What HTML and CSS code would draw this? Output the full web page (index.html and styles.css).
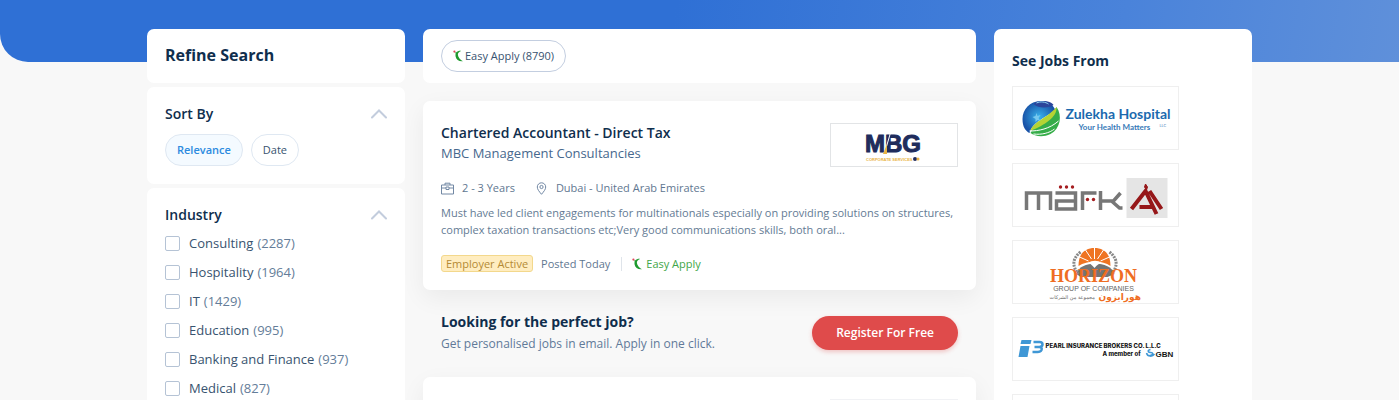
FILE: index.html
```html
<!DOCTYPE html>
<html lang="en">
<head>
<meta charset="utf-8">
<meta name="viewport" content="width=device-width, initial-scale=1">
<title>Jobs</title>
<link rel="stylesheet" href="styles.css">
</head>
<body>
<svg class="defs" aria-hidden="true">
  <symbol id="easy" viewBox="0 0 10 12"><path d="M1.800 2.200 3 2.600C4.500 1.200 6.300.7 8 .9 5.700 1.700 4.700 3.200 4.900 5 5.200 7.500 7.200 9.700 9.900 11.200 5.900 11.600 3.200 9.600 2.600 6.500 2.400 5 2.500 4 2.700 3.400z" fill="#1f9a2e"/><circle cx="1.400" cy="1.600" r="1.100" fill="#e0455a"/></symbol>
  <symbol id="chevron" viewBox="0 0 16 10"><path d="M1 8.500 8 1.500l7 7" fill="none" stroke="#c3cddd" stroke-width="2" stroke-linecap="round"/></symbol>
</svg>
<div class="page">
  <main class="columns">
    <aside class="filters">
      <section class="card filters-head"><h2>Refine Search</h2></section>
      <section class="card filter">
        <div class="filter-title"><h3>Sort By</h3><button class="toggle" aria-label="Collapse Sort By"><svg><use href="#chevron"/></svg></button></div>
        <div class="pills"><button class="pill pill-on">Relevance</button><button class="pill">Date</button></div>
      </section>
      <section class="card filter">
        <div class="filter-title"><h3>Industry</h3><button class="toggle" aria-label="Collapse Industry"><svg><use href="#chevron"/></svg></button></div>
        <div class="options">
          <label><input type="checkbox">Consulting <span>(2287)</span></label>
          <label><input type="checkbox">Hospitality <span>(1964)</span></label>
          <label><input type="checkbox">IT <span>(1429)</span></label>
          <label><input type="checkbox">Education <span>(995)</span></label>
          <label><input type="checkbox">Banking and Finance <span>(937)</span></label>
          <label><input type="checkbox">Medical <span>(827)</span></label>
        </div>
      </section>
    </aside>

    <div class="results">
      <section class="card quick"><button class="pill pill-easy"><svg class="easy"><use href="#easy"/></svg>Easy Apply (8790)</button></section>
      <article class="card job">
        <div class="job-head">
          <div>
            <h2><a href="#">Chartered Accountant - Direct Tax</a></h2>
            <a class="company" href="#">MBC Management Consultancies</a>
          </div>
          <div class="job-logo">
            <svg viewBox="0 0 126 42" role="img" aria-label="MBG Corporate Services">
              <text class="mbg" x="62" y="28" text-anchor="middle">MBG</text>
              <path d="M53 31 60 7" stroke="#fff" stroke-width="1"/>
              <path d="M52 30 56 20v10z" fill="#e9b445"/>
              <text class="mbg-sub" x="35" y="37">CORPORATE SERVICES</text>
              <circle cx="84" cy="35" r="2" fill="#202c5c"/><circle cx="87" cy="35" r="1.500" fill="#e9b445"/>
            </svg>
          </div>
        </div>
        <div class="meta">
          <svg viewBox="0 0 13 13"><path d="M.5 3h12v9H.5zM4 3V1.200h5V3M.5 6h4.500M8 6h4.500M5 5h3v2.500H5z"/></svg><span>2 - 3 Years</span>
          <svg viewBox="0 0 13 13"><path d="M6.500 12.300C4 9.300 2.300 7.300 2.300 5a4.200 4.200 0 0 1 8.400 0c0 2.300-1.700 4.300-4.200 7.300z"/><circle cx="6.500" cy="5" r="1.600"/></svg><span>Dubai - United Arab Emirates</span>
        </div>
        <p class="summary">Must have led client engagements for multinationals especially on providing solutions on structures, complex taxation transactions etc;Very good communications skills, both oral...</p>
        <div class="tags"><span class="badge">Employer Active</span><span class="posted">Posted Today</span><a class="apply" href="#"><svg class="easy"><use href="#easy"/></svg>Easy Apply</a></div>
      </article>
      <section class="promo">
        <div><h2>Looking for the perfect job?</h2><p>Get personalised jobs in email. Apply in one click.</p></div>
        <button class="register">Register For Free</button>
      </section>
      <article class="card job job-next"><div class="job-head"><div></div><div class="job-logo"></div></div></article>
    </div>

    <aside class="card employers">
      <h2>See Jobs From</h2>
      <a href="#" aria-label="Zulekha Hospital"><svg viewBox="0 0 164 62">
        <defs><radialGradient id="globe"><stop offset="0" stop-color="#39b3ec"/><stop offset="1" stop-color="#1953a8"/></radialGradient></defs>
        <path d="M29 14C17 13 9 22 9 32c0 8 3 12 7 14 3-11 14-14 26-23C39 17 34 14 29 14z" fill="url(#globe)"/>
        <path d="M20 17c3-4 17-4 20 1-4 3-15 4-20-1z" fill="#2b459b"/><path d="M23 16c4-2 9-1 12 1" fill="none" stroke="#8fd6f3"/>
        <path d="M43 20c6 8 4 22-6 27-8 4-16 2-20-1 5-10 20-13 26-26z" fill="#36ad49"/>
        <path d="M43 20c1 10-12 18-26 24 2-9 17-13 26-24z" fill="#b5d334"/>
        <path d="M16 44c9 0 20-2 29-10M20 47c8 1 16-1 21-5" fill="none" stroke="#fff"/>
        <path d="m23 26 1 3 3-1-2 3 2 3-3-1-2 2v-3l-3-2 3-1z" fill="#77c9ef"/>
        <text class="zulekha" x="52" y="32">Zulekha Hospital</text>
        <text class="zulekha-sub" x="65" y="43">Your Health Matters</text><text class="tiny-blue" x="146" y="40">LLC</text>
      </svg></a>
      <a href="#" aria-label="Mark AI"><svg viewBox="0 0 164 62">
        <g fill="none" stroke="#777" stroke-width="3.500"><path d="M13 46V29h24v17M25 29v17M42 29h20v16H43v-8h19M69 46V29h14M87 27v19M87 37h13l7-8M98 37l8 7h3"/></g>
        <g fill="#a51d20"><circle cx="47" cy="23" r="1.700"/><circle cx="53" cy="23" r="1.700"/><circle cx="59" cy="23" r="1.700"/><circle cx="74" cy="35.500" r="1.700"/><circle cx="80" cy="35.500" r="1.700"/></g>
        <path d="M113 14h41v40h-41z" fill="#e5e5e5"/>
        <path d="M118 45 132 27 143 50M126 43h13M136 27l12 18" fill="none" stroke="#961719" stroke-width="4"/><path d="m132 20 2 3 -1 3-2-3z" fill="#961719" stroke="#961719"/>
      </svg></a>
      <a href="#" aria-label="Horizon Group of Companies"><svg viewBox="0 0 164 62">
        <path d="M65 25C65 12 72 7 81 7s16 5 16 18c-8-6-23-6-32 0z" fill="#ef7422"/>
        <path d="M81 18V7M78 18l-6-9M75 20l-9-4M84 18l6-9M87 20l9-4" stroke="#fff"/>
        <path d="M63 33c3-14 34-14 38 0l-7 3H67z" fill="#747474"/><path d="M75 22c4-3 9-3 13 0-4 1-5 3-7 5-2-2-3-4-6-5z" fill="#fff"/>
        <g fill="none" stroke="#888" stroke-width="3" stroke-dasharray="2 1"><path d="M67 11c-9 7-8 15-2 22M96 11c9 7 8 15 2 22"/></g>
        <text class="horizon" x="80" y="41" text-anchor="middle">HORIZON</text>
        <text class="horizon-sub" x="80" y="50" text-anchor="middle">GROUP OF COMPANIES</text>
        <text class="arabic-small" x="36" y="58">مجموعة من الشركات</text><text class="arabic" x="85" y="59">هورايزون</text>
      </svg></a>
      <a href="#" aria-label="Pearl Insurance Brokers"><svg viewBox="0 0 164 62">
        <path d="M8 22h10l-1 4H7zM7 28h9l-2 11H5z" fill="#3f97d5"/><path d="M20 24h6q3 0 3 2.500 0 2-3 2.500 3 .5 2 3-1 2-4 2h-5M21 29h5" fill="none" stroke="#3f97d5" stroke-width="2.500"/>
        <text class="pearl" x="32" y="30">PEARL INSURANCE BROKERS CO. L.L.C</text>
        <text class="pearl" x="89" y="38">A member of</text>
        <path d="M137 31.500c-4 1-2 3 0 3 4 0 2 3-1 3M133 35c1 4 6 4 8 1" fill="none" stroke="#3f97d5" stroke-width="1.500"/>
        <text class="gbn" x="142" y="39">GBN</text>
      </svg></a>
      <a href="#" aria-label="More employers"></a>
    </aside>
  </main>
</div>
</body>
</html>
```
FILE: styles.css
```css
* { box-sizing: border-box; }
body {
  margin: 0;
  background: #f8f8f8;
  color: #0f2e4d;
  font: 11px/18px "Open Sans", "Noto Sans", sans-serif;
}
h2, h3, p { margin: 0; }
a { color: inherit; text-decoration: none; }
button { font: inherit; cursor: pointer; }
.defs { display: none; }
.page { height: 100vh; overflow: hidden; isolation: isolate; }
.page::before {
  content: "";
  position: absolute;
  inset: 0 0 auto;
  z-index: -1;
  height: 62px;
  border-bottom-left-radius: 28px;
  background: linear-gradient(100deg, #2f70d5 0%, #2f70d5 48%, #4a83da 80%, #5f90da 100%);
}
.columns {
  display: grid;
  grid-template-columns: 258px minmax(0, 1fr) 258px;
  gap: 18px;
  align-items: start;
  max-width: 1105px;
  margin: 0 auto;
  padding-top: 29px;
}
.card { background: #fff; border-radius: 7px; }

.filters { display: grid; gap: 4px; }
.filters-head { padding: 15px 18px 17px; }
.filters-head h2 { font-size: 16px; font-weight: 700; line-height: 22px; }
.filter { padding: 17px 18px 18px; }
.filter-title { display: flex; justify-content: space-between; align-items: center; }
.filter-title h3 { font-size: 14px; font-weight: 600; line-height: 20px; }
.toggle { display: flex; padding: 0; border: 0; background: none; }
.toggle svg { width: 16px; height: 10px; }
.pills { display: flex; gap: 8px; margin-top: 10px; }
.pill {
  height: 32px;
  padding: 0 11px;
  border: 1px solid #dfe8f2;
  border-radius: 16px;
  background: #fff;
  color: #38536f;
}
.pill-on { background: #f4faff; color: #2d8be0; font-weight: 600; }
.options { margin-top: 4px; font-size: 13px; color: #38536f; }
.options label { display: flex; align-items: center; gap: 4px; line-height: 29px; }
.options span { color: #647d99; }
.options input {
  appearance: none;
  width: 15px;
  height: 15px;
  margin: 0 5px 0 0;
  border: 1px solid #b5c3d5;
  border-radius: 2px;
  background: #fff;
}

.results { min-width: 0; }
.quick { padding: 11px 18px; }
.pill-easy { display: flex; align-items: center; gap: 2px; border-color: #c3cee0; }
.easy { width: 10px; height: 12px; }
.job {
  margin-top: 18px;
  padding: 21px 18px 18px;
  box-shadow: 0 8px 24px rgba(0, 0, 0, .06);
}
.job-head { display: flex; justify-content: space-between; gap: 18px; }
.job-head h2 { font-size: 14px; font-weight: 600; line-height: 21px; }
.company { display: block; font-size: 13px; line-height: 21px; color: #47688d; }
.job-logo { width: 128px; height: 44px; margin-top: 1px; margin-bottom: -3px; border: 1px solid #e2e4e6; }
.job-logo svg, .employers svg { display: block; width: 100%; height: 100%; }
.meta { display: flex; align-items: center; margin-top: 15px; color: #5f7791; }
.meta svg { width: 13px; height: 13px; margin-right: 8px; fill: none; stroke: #7288a4; }
.meta span { margin-right: 20px; }
.summary { margin-top: 7px; line-height: 17px; color: #647b94; }
.tags { display: flex; align-items: center; margin-top: 17px; line-height: 17px; color: #5f7791; }
.badge { padding: 0 4px; border: 1px solid #f3d88c; border-radius: 3px; background: #ffedc0; color: #b48a34; line-height: 15px; }
.posted { margin: 0 11px 0 8px; }
.apply { display: flex; align-items: center; gap: 4px; padding-left: 10px; border-left: 1px solid #dfe4ea; line-height: 14px; color: #3fa648; }

.promo { display: flex; justify-content: space-between; align-items: center; padding: 21px 18px 23px; }
.promo h2 { font-size: 14px; font-weight: 700; line-height: 22px; }
.promo p { font-size: 12px; line-height: 21px; color: #617a98; }
.register {
  height: 34px;
  padding: 0 24px;
  border: 0;
  border-radius: 17px;
  background: #df4b4b;
  box-shadow: 0 2px 4px rgba(223, 75, 75, .3);
  color: #fff;
  font-size: 12px;
  font-weight: 600;
}
.job-next { margin-top: 0; }
.job-next .job-logo { border-color: #f1f2f5; }

.employers { display: grid; gap: 13px; padding: 20px 73px 18px 18px; }
.employers h2 { font-size: 14px; font-weight: 700; line-height: 24px; }
.employers a { height: 64px; border: 1px solid #efefef; }

.mbg { font: 700 24px "Liberation Sans", sans-serif; fill: #202c5c; stroke: #202c5c; }
.mbg-sub { font: 700 4px "Liberation Sans", sans-serif; fill: #e9b445; }
.zulekha { font: 700 14px Lato, sans-serif; fill: #1b69ae; }
.zulekha-sub { font: 700 8px Lato, sans-serif; fill: #397bb8; }
.tiny-blue { font: 4px Lato, sans-serif; fill: #4b88bd; }
.horizon { font: 700 18px "Liberation Serif", serif; fill: #ef6d22; }
.horizon-sub { font: 7px "Liberation Sans", sans-serif; fill: #666; }
.arabic-small { font: 5px "DejaVu Sans", sans-serif; fill: #666; }
.arabic { font: 700 9px "DejaVu Sans", sans-serif; fill: #ef6d22; }
.pearl { font: 800 6px Inter, sans-serif; fill: #151515; }
.gbn { font: 700 8px "Liberation Sans", sans-serif; fill: #151515; }

@media (max-width: 1120px) {
  .columns { grid-template-columns: 1fr; padding: 29px 18px 0; }
}
```
